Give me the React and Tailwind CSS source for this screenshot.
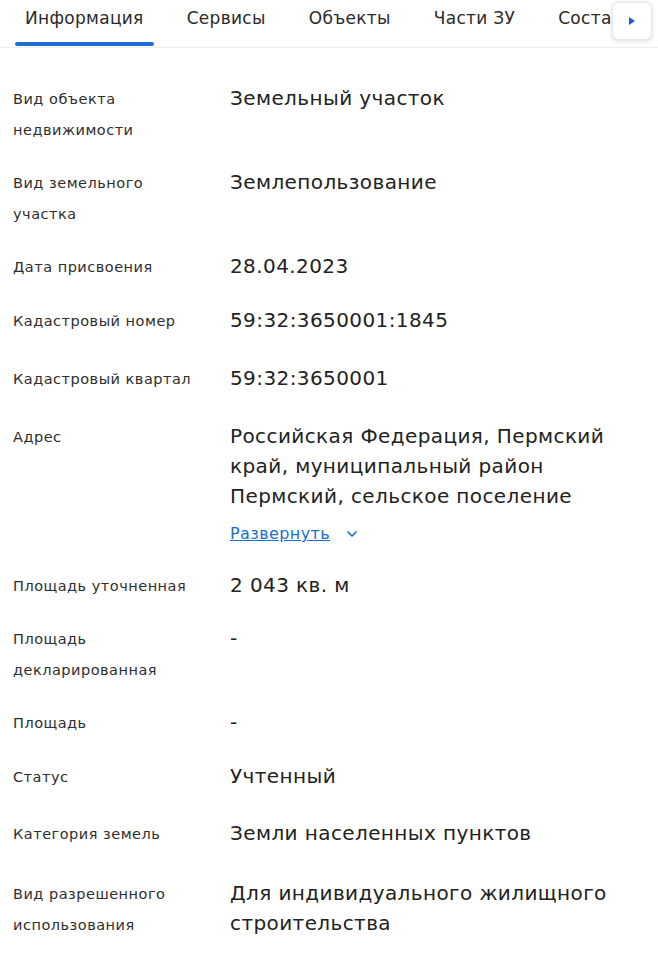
import { ChevronDown } from "lucide-react";

const tabs = ["Информация", "Сервисы", "Объекты", "Части ЗУ", "Состав"];

const rows = [
  { label: ["Вид объекта", "недвижимости"], value: ["Земельный участок"], pb: "pb-[22px]" },
  { label: ["Вид земельного", "участка"], value: ["Землепользование"], pb: "pb-[22px]" },
  { label: ["Дата присвоения"], value: ["28.04.2023"], pb: "pb-[23px]" },
  { label: ["Кадастровый номер"], value: ["59:32:3650001:1845"], pb: "pb-[27px]" },
  { label: ["Кадастровый квартал"], value: ["59:32:3650001"], pb: "pb-[27px]" },
  {
    label: ["Адрес"],
    value: ["Российская Федерация, Пермский", "край, муниципальный район", "Пермский, сельское поселение"],
    expand: true,
    pb: "pb-[25px]",
  },
  { label: ["Площадь уточненная"], value: ["2 043 кв. м"], pb: "pb-[22px]" },
  { label: ["Площадь", "декларированная"], value: ["-"], pb: "pb-[22px]" },
  { label: ["Площадь"], value: ["-"], pb: "pb-[23px]" },
  { label: ["Статус"], value: ["Учтенный"], pb: "pb-[26px]" },
  { label: ["Категория земель"], value: ["Земли населенных пунктов"], pb: "pb-[29px]" },
  { label: ["Вид разрешенного", "использования"], value: ["Для индивидуального жилищного", "строительства"], pb: "pb-[22px]" },
];

export default function App() {
  return (
    <div className="w-[658px] h-[960px] bg-white overflow-hidden" style={{ fontFamily: "'DejaVu Sans', 'Noto Sans', sans-serif" }}>
      {/* Tabs */}
      <div className="relative h-[48px] border-b border-[#eceef1] flex items-start">
        <div className="flex pl-[15px] gap-[23px] whitespace-nowrap overflow-hidden w-[612px]">
          {tabs.map((t, i) => (
            <div key={t} className="relative flex flex-col shrink-0">
              <div className="h-[42px] flex items-center px-[10px] text-[17px] tracking-[0.3px] text-[#2a2a2a] pb-[5px]">{t}</div>
              <div className={`h-[4px] rounded-full ${i === 0 ? "bg-[#1f6fd1]" : "bg-transparent"}`} />
            </div>
          ))}
        </div>
        <div className="absolute right-[6px] top-[2px] w-[40px] h-[38px] bg-white rounded-[6px] border border-[#e3e6ea] shadow-[0_1px_4px_rgba(0,0,0,0.15)] flex items-center justify-center">
          <svg width="8" height="10" viewBox="0 0 8 10">
            <path d="M1 1 L7 5 L1 9 Z" fill="#1a5fc9" />
          </svg>
        </div>
      </div>

      {/* Rows */}
      <div className="pt-[36px] flex flex-col">
        {rows.map((r, i) => (
          <div key={i} className={`flex ${r.pb}`}>
            <div className="w-[230px] pl-[13px] text-[14.5px] tracking-[0.5px] leading-[31px] text-[#2e2e2e]">
              {r.label.map((l) => (
                <div key={l}>{l}</div>
              ))}
            </div>
            <div className="flex-1 text-[20px] tracking-[0.4px] leading-[30px] text-[#222] -mt-[1px] whitespace-nowrap">
              {r.value.map((v) => (
                <div key={v}>{v}</div>
              ))}
              {r.expand && (
                <div className="flex items-center gap-[14px] mt-[11px] leading-[24px]">
                  <span className="text-[16px] tracking-[0.4px] text-[#1a6ed1] underline">Развернуть</span>
                  <ChevronDown size={16} strokeWidth={2.5} className="text-[#1a6ed1]" />
                </div>
              )}
            </div>
          </div>
        ))}
      </div>
    </div>
  );
}
